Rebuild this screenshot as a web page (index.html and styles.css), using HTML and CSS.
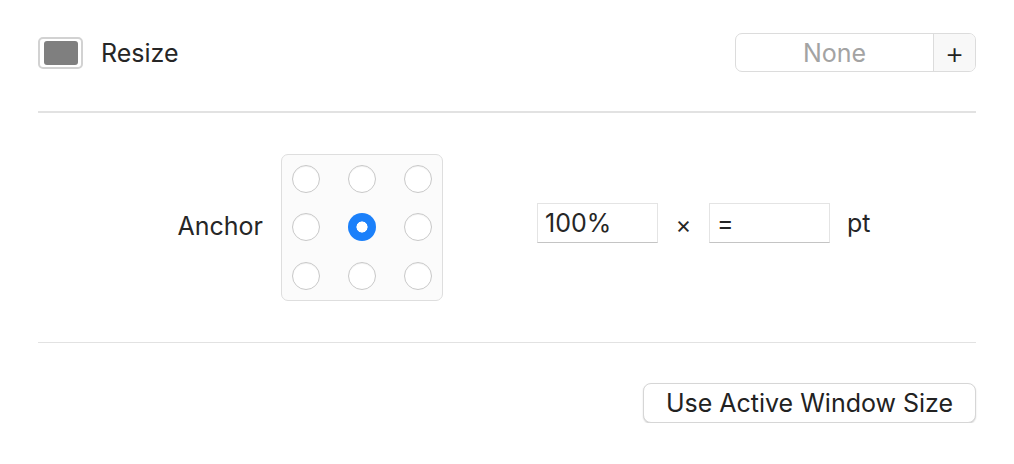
FILE: index.html
```html
<!DOCTYPE html>
<html>
<head>
<meta charset="utf-8">
<link rel="stylesheet" href="styles.css">
</head>
<body>
<div class="panel">
  <div class="top-row">
    <div class="toggle">
      <span class="checkbox"><span class="checkbox-fill"></span></span>
      <span class="label">Resize</span>
    </div>
    <div class="segmented">
      <span class="seg seg-main">None</span>
      <span class="seg seg-add">+</span>
    </div>
  </div>
  <div class="separator"></div>
  <div class="mid-row">
    <span class="anchor-label">Anchor</span>
    <div class="anchor-grid">
      <span class="dot"></span><span class="dot"></span><span class="dot"></span>
      <span class="dot"></span><span class="dot selected"></span><span class="dot"></span>
      <span class="dot"></span><span class="dot"></span><span class="dot"></span>
    </div>
    <div class="size-fields">
      <div class="field">100%</div>
      <span class="times">×</span>
      <div class="field">=</div>
      <span class="unit">pt</span>
    </div>
  </div>
  <div class="separator"></div>
  <div class="bottom-row">
    <button class="button">Use Active Window Size</button>
  </div>
</div>
</body>
</html>
```
FILE: styles.css
```css
html, body {
  margin: 0;
  padding: 0;
  background: #ffffff;
}
body {
  font-family: Inter, "Liberation Sans", sans-serif;
  color: #262626;
  font-size: 25px;
}
.panel {
  display: flex;
  flex-direction: column;
  padding: 33px 38px 0 38px;
}
.top-row {
  display: flex;
  align-items: center;
  justify-content: space-between;
  height: 39px;
}
.toggle {
  display: flex;
  align-items: center;
  gap: 18px;
}
.checkbox {
  box-sizing: border-box;
  width: 45px;
  height: 32px;
  border: 2px solid #d2d2d2;
  border-radius: 5px;
  padding: 2.5px 3.5px 2px 4px;
  display: flex;
  background: #fff;
}
.checkbox-fill {
  flex: 1;
  background: #7f7f7f;
  border-radius: 3px;
}
.label {
  line-height: 1;
  position: relative;
  top: 1px;
}
.segmented {
  box-sizing: border-box;
  width: 241px;
  height: 39px;
  border: 1.5px solid #dcdcdc;
  border-radius: 7px;
  display: flex;
  overflow: hidden;
}
.seg {
  display: flex;
  align-items: center;
  justify-content: center;
}
.seg-main {
  flex: 1;
  color: #a3a3a3;
  border-right: 1.5px solid #dcdcdc;
}
.seg-add {
  width: 41px;
  background: #f8f8f8;
  color: #222;
  font-size: 30px;
  font-weight: 300;
}
.separator {
  height: 1.5px;
  background: #e2e2e2;
  margin-top: 39px;
}
.mid-row {
  display: flex;
  align-items: center;
  margin-top: 41px;
  padding-bottom: 2px;
}
.anchor-label {
  width: 225px;
  text-align: right;
  position: relative;
  top: -1px;
}
.anchor-grid {
  box-sizing: border-box;
  margin-left: 18px;
  width: 162px;
  height: 147px;
  border: 1.5px solid #dedede;
  border-radius: 7px;
  background: #fbfbfb;
  padding: 10px;
  display: grid;
  grid-template-columns: repeat(3, 28px);
  grid-template-rows: repeat(3, 28px);
  justify-content: space-between;
  align-content: space-between;
}
.dot {
  box-sizing: border-box;
  width: 28px;
  height: 28px;
  border-radius: 50%;
  border: 1px solid #c9c9c9;
  background: #ffffff;
  box-shadow: inset 0 1px 1px rgba(0,0,0,0.05);
}
.dot.selected {
  border: none;
  background: radial-gradient(circle, #ffffff 0 5.3px, #1b80fa 5.8px);
  box-shadow: none;
}
.size-fields {
  display: flex;
  align-items: center;
  margin-left: 94px;
  margin-bottom: 9px;
}
.field {
  box-sizing: border-box;
  width: 121px;
  height: 40px;
  border: 1px solid #e4e4e4;
  border-bottom: 1.5px solid #c4c4c4;
  padding: 0 7px;
  display: flex;
  align-items: center;
  background: #fff;
}
.times {
  width: 51px;
  text-align: center;
  font-size: 24px;
  position: relative;
  top: 2px;
}
.unit {
  margin-left: 17px;
}
.bottom-row {
  display: flex;
  justify-content: flex-end;
  margin-top: 40px;
}
.button {
  box-sizing: border-box;
  width: 333px;
  height: 40px;
  border: 1px solid #d6d6d6;
  border-radius: 8px;
  background: #ffffff;
  box-shadow: 0 1px 1.5px rgba(0,0,0,0.18);
  font-family: inherit;
  font-size: 25px;
  color: #222;
  padding: 0;
}
```
